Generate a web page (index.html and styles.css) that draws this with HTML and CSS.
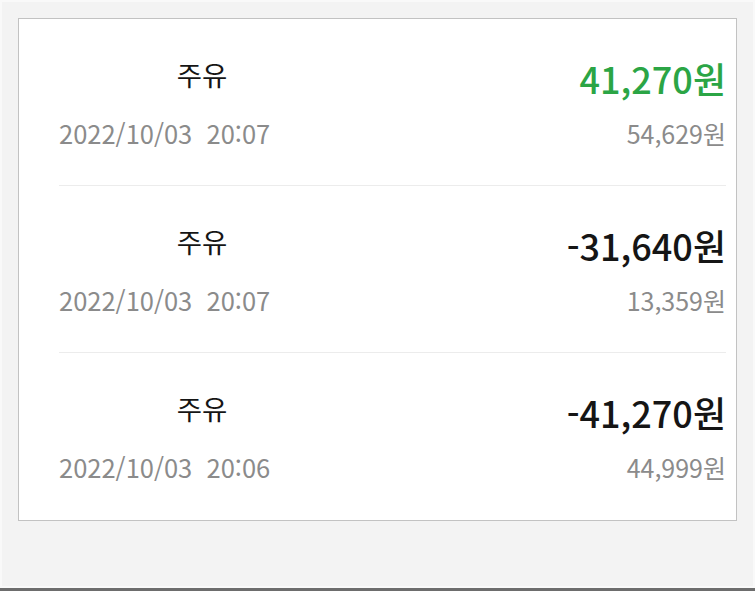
FILE: index.html
```html
<!DOCTYPE html>
<html lang="ko">
<head>
    <meta charset="UTF-8">
    <meta name="viewport" content="width=device-width, initial-scale=1.0">
    <title>주유 내역</title>
    <link rel="stylesheet" href="styles.css">
</head>
<body>
    <div class="frame">
        <div class="history">
            <div class="history-row">
                <div class="row-left">
                    <div class="row-title">주유</div>
                    <div class="row-date">2022/10/03&nbsp;&nbsp;20:07</div>
                </div>
                <div class="row-right">
                    <div class="row-amount plus">41,270원</div>
                    <div class="row-balance">54,629원</div>
                </div>
            </div>
            <div class="history-row">
                <div class="row-left">
                    <div class="row-title">주유</div>
                    <div class="row-date">2022/10/03&nbsp;&nbsp;20:07</div>
                </div>
                <div class="row-right">
                    <div class="row-amount">-31,640원</div>
                    <div class="row-balance">13,359원</div>
                </div>
            </div>
            <div class="history-row">
                <div class="row-left">
                    <div class="row-title">주유</div>
                    <div class="row-date">2022/10/03&nbsp;&nbsp;20:06</div>
                </div>
                <div class="row-right">
                    <div class="row-amount">-41,270원</div>
                    <div class="row-balance">44,999원</div>
                </div>
            </div>
        </div>
    </div>
</body>
</html>
```

FILE: styles.css
```css
body {
    margin: 0;
    background: #f1f1f1;
    font-family: "Noto Sans CJK KR", "Noto Sans", sans-serif;
}

.frame {
    box-sizing: border-box;
    height: 591px;
    padding: 18px;
    background: #f3f3f3;
    border-bottom: 3px solid #6d6d6d;
    box-shadow: inset 0 0 0 2px #f9f9f9;
}

.history {
    background: #fff;
    border: 1px solid #c2c2c2;
    padding: 0 10px 0 40px;
}

.history-row {
    height: 166px;
    display: flex;
    justify-content: space-between;
    border-bottom: 1px solid #ececec;
}

.history-row:last-child {
    border-bottom: none;
    height: 167px;
}

.row-left {
    width: 286px;
    padding-top: 35px;
}

.row-title {
    text-align: center;
    font-size: 27.5px;
    line-height: 40px;
    color: #151515;
}

.row-date {
    margin-top: 19px;
    font-size: 25.5px;
    line-height: 40px;
    color: #8b8b8b;
}

.row-right {
    padding-top: 39px;
    text-align: right;
}

.row-amount {
    font-size: 36px;
    font-weight: 500;
    line-height: 40px;
    color: #151515;
}

.row-amount.plus {
    color: #2ba545;
}

.row-balance {
    margin-top: 15px;
    font-size: 25px;
    line-height: 40px;
    color: #8b8b8b;
}
```
